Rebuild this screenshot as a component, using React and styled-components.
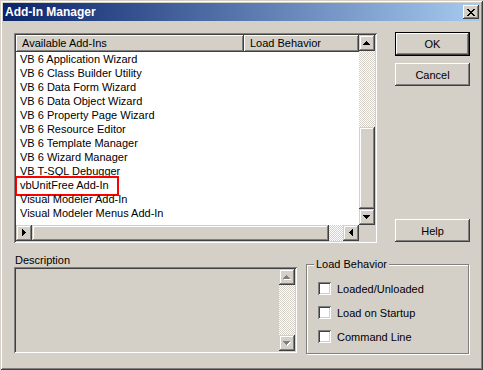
import React from 'react';
import styled, { createGlobalStyle, css } from 'styled-components';

const FACE = '#d4d0c8';

const GlobalStyle = createGlobalStyle`
  html, body { margin: 0; padding: 0; background: ${FACE}; }
  body {
    font-family: "Liberation Sans", Arial, sans-serif;
    font-size: 11px;
    color: #000;
  }
  * { box-sizing: border-box; }
`;

const raised = css`
  background: ${FACE};
  box-shadow: inset -1px -1px #404040, inset 1px 1px ${FACE}, inset -2px -2px #808080, inset 2px 2px #fff;
`;
const pushed = css`
  background: ${FACE};
  box-shadow: inset -1px -1px #404040, inset 1px 1px #fff, inset -2px -2px #808080;
`;
const sunken = css`
  box-shadow: inset 1px 1px #808080, inset -1px -1px #fff, inset 2px 2px #404040, inset -2px -2px ${FACE};
`;
const checker = css`
  background: repeating-conic-gradient(#fff 0 25%, ${FACE} 0 50%) 0 0 / 2px 2px;
`;

const Window = styled.div`
  width: 483px;
  height: 370px;
  padding: 3px;
  background: ${FACE};
  box-shadow: inset 1px 1px ${FACE}, inset -1px -1px #404040, inset 2px 2px #fff, inset -2px -2px #808080;
  display: flex;
  flex-direction: column;
`;

const TitleBar = styled.div`
  height: 18px;
  display: flex;
  align-items: center;
  justify-content: space-between;
  padding: 0 1px 0 2px;
  background: linear-gradient(to right, #0a246a, #a6caf0);
  color: #fff;
  font-weight: bold;
  font-size: 12px;
`;

const CloseButton = styled.div`
  width: 16px;
  height: 14px;
  ${pushed};
  display: flex;
  align-items: center;
  justify-content: center;
  padding-right: 1px;
`;

const Client = styled.div`
  flex: 1;
  display: flex;
  flex-direction: column;
  padding: 12px 0 0 11px;
`;

const TopRow = styled.div`
  display: flex;
  align-items: stretch;
  height: 210px;
`;

const ListBox = styled.div`
  width: 363px;
  height: 210px;
  padding: 2px;
  ${sunken};
  background: ${FACE};
  display: grid;
  grid-template-columns: 1fr 16px;
  grid-template-rows: 1fr 16px;
`;

const ListArea = styled.div`
  background: #fff;
  overflow: hidden;
`;

const Header = styled.div`
  display: flex;
  height: 17px;
`;

const HeaderCell = styled.div`
  ${pushed};
  width: ${p => (p.$w ? `${p.$w}px` : 'auto')};
  flex: ${p => (p.$w ? 'none' : '1')};
  height: 17px;
  line-height: 17px;
  padding-left: 6px;
  white-space: nowrap;
`;

const ListRow = styled.div`
  position: relative;
  height: 14px;
  line-height: 14px;
  padding-left: 4px;
  white-space: nowrap;
  ${p => p.$marked && css`
    &::after {
      content: '';
      position: absolute;
      left: -1px;
      top: -2px;
      width: 100px;
      height: 16px;
      border: 2px solid #ff0000;
    }
  `}
`;

const VScroll = styled.div`
  display: flex;
  flex-direction: column;
`;

const HScroll = styled.div`
  display: flex;
`;

const Track = styled.div`
  flex: 1;
  display: flex;
  flex-direction: ${p => (p.$vertical ? 'column' : 'row')};
  justify-content: ${p => (p.$end ? 'flex-end' : 'flex-start')};
  ${checker};
`;

const Thumb = styled.div`
  ${raised};
  width: ${p => (p.$w ? `${p.$w}px` : '16px')};
  height: ${p => (p.$h ? `${p.$h}px` : '16px')};
`;

const ScrollBtn = styled.div`
  width: 16px;
  height: 16px;
  flex: none;
  ${raised};
  display: flex;
  align-items: center;
  justify-content: center;
  padding: ${p => p.$pad || '0'};
`;

const Corner = styled.div`
  background: ${FACE};
`;

const ButtonColumn = styled.div`
  margin-left: 18px;
  width: 75px;
  display: flex;
  flex-direction: column;
`;

const PushButton = styled.div`
  height: ${p => (p.$default ? '24px' : '23px')};
  ${pushed};
  ${p => p.$default && css`
    border: 1px solid #000;
    margin-top: -1px;
  `}
  display: flex;
  align-items: center;
  justify-content: center;
  margin-bottom: ${p => p.$mb || '0'};
  & + & { margin-top: 7px; }
  &:last-child { margin-top: auto; margin-bottom: 1px; }
`;

const BottomRow = styled.div`
  display: flex;
  align-items: flex-start;
  margin-top: 11px;
`;

const DescCol = styled.div`
  width: 283px;
  display: flex;
  flex-direction: column;
`;

const Label = styled.div`
  height: 13px;
  line-height: 13px;
  padding-left: 1px;
`;

const DescBox = styled.div`
  height: 86px;
  padding: 2px;
  ${sunken};
  background: ${FACE};
  display: flex;
  justify-content: flex-end;
`;

const DescScroll = styled.div`
  width: 16px;
  display: flex;
  flex-direction: column;
`;

const Group = styled.fieldset`
  margin: 4px 0 0 9px;
  padding: 0 0 0 0;
  width: 163px;
  height: 96px;
  border: 1px solid #808080;
  box-shadow: inset 1px 1px #fff, 1px 1px #fff;
  display: flex;
  flex-direction: column;
  gap: 11px;
`;

const Legend = styled.legend`
  margin-left: 7px;
  padding: 0 2px;
  line-height: 13px;
  background: ${FACE};
`;

const CheckRow = styled.div`
  display: flex;
  align-items: center;
  gap: 6px;
  height: 13px;
  margin-left: 11px;
  &:first-of-type { margin-top: 11px; }
`;

const CheckBox = styled.div`
  width: 13px;
  height: 13px;
  background: #fff;
  ${sunken};
`;

const px = rows => rows.map(([x, y, w]) => `M${x} ${y}h${w}v1h-${w}z`).join('');

const ARROWS = {
  up: { w: 7, h: 4, d: px([[3, 0, 1], [2, 1, 3], [1, 2, 5], [0, 3, 7]]) },
  down: { w: 7, h: 4, d: px([[0, 0, 7], [1, 1, 5], [2, 2, 3], [3, 3, 1]]) },
};
const sideArrow = dir => {
  const cols = [1, 3, 5, 7];
  let d = '';
  cols.forEach((h, i) => {
    const x = dir === 'right' ? i : 3 - i;
    d += `M${x} ${(7 - h) / 2}h1v${h}h-1z`;
  });
  return { w: 4, h: 7, d };
};
ARROWS.left = sideArrow('left');
ARROWS.right = sideArrow('right');

const Arrow = ({ dir, disabled }) => {
  const a = ARROWS[dir];
  return (
    <svg width={a.w + 1} height={a.h + 1} viewBox={`0 0 ${a.w + 1} ${a.h + 1}`} shapeRendering="crispEdges">
      {disabled && <path d={a.d} fill="#fff" transform="translate(1 1)" />}
      <path d={a.d} fill={disabled ? '#808080' : '#000'} />
    </svg>
  );
};

const CloseGlyph = () => (
  <svg width="8" height="7" viewBox="0 0 8 7" shapeRendering="crispEdges">
    <path
      fill="#000"
      d={px([
        [0, 0, 2], [6, 0, 2],
        [1, 1, 2], [5, 1, 2],
        [2, 2, 4],
        [3, 3, 2],
        [2, 4, 4],
        [1, 5, 2], [5, 5, 2],
        [0, 6, 2], [6, 6, 2],
      ])}
    />
  </svg>
);

const items = [
  'VB 6 Application Wizard',
  'VB 6 Class Builder Utility',
  'VB 6 Data Form Wizard',
  'VB 6 Data Object Wizard',
  'VB 6 Property Page Wizard',
  'VB 6 Resource Editor',
  'VB 6 Template Manager',
  'VB 6 Wizard Manager',
  'VB T-SQL Debugger',
  'vbUnitFree Add-In',
  'Visual Modeler Add-In',
  'Visual Modeler Menus Add-In',
];

export default function App() {
  return (
    <>
      <GlobalStyle />
      <Window>
        <TitleBar>
          <span>Add-In Manager</span>
          <CloseButton><CloseGlyph /></CloseButton>
        </TitleBar>
        <Client>
          <TopRow>
            <ListBox>
              <ListArea>
                <Header>
                  <HeaderCell $w={228}>Available Add-Ins</HeaderCell>
                  <HeaderCell>Load Behavior</HeaderCell>
                </Header>
                {items.map((t, i) => (
                  <ListRow key={t} $marked={i === 9}>{t}</ListRow>
                ))}
              </ListArea>
              <VScroll>
                <ScrollBtn><Arrow dir="up" /></ScrollBtn>
                <Track $vertical $end>
                  <Thumb $h={82} />
                </Track>
                <ScrollBtn><Arrow dir="down" /></ScrollBtn>
              </VScroll>
              <HScroll>
                <ScrollBtn><Arrow dir="left" /></ScrollBtn>
                <Track>
                  <Thumb $w={297} />
                </Track>
                <ScrollBtn><Arrow dir="right" /></ScrollBtn>
              </HScroll>
              <Corner />
            </ListBox>
            <ButtonColumn>
              <PushButton $default>OK</PushButton>
              <PushButton>Cancel</PushButton>
              <PushButton>Help</PushButton>
            </ButtonColumn>
          </TopRow>
          <BottomRow>
            <DescCol>
              <Label>Description</Label>
              <DescBox>
                <DescScroll>
                  <ScrollBtn><Arrow dir="up" disabled /></ScrollBtn>
                  <Track $vertical />
                  <ScrollBtn><Arrow dir="down" disabled /></ScrollBtn>
                </DescScroll>
              </DescBox>
            </DescCol>
            <Group>
              <Legend>Load Behavior</Legend>
              <CheckRow><CheckBox />Loaded/Unloaded</CheckRow>
              <CheckRow><CheckBox />Load on Startup</CheckRow>
              <CheckRow><CheckBox />Command Line</CheckRow>
            </Group>
          </BottomRow>
        </Client>
      </Window>
    </>
  );
}
